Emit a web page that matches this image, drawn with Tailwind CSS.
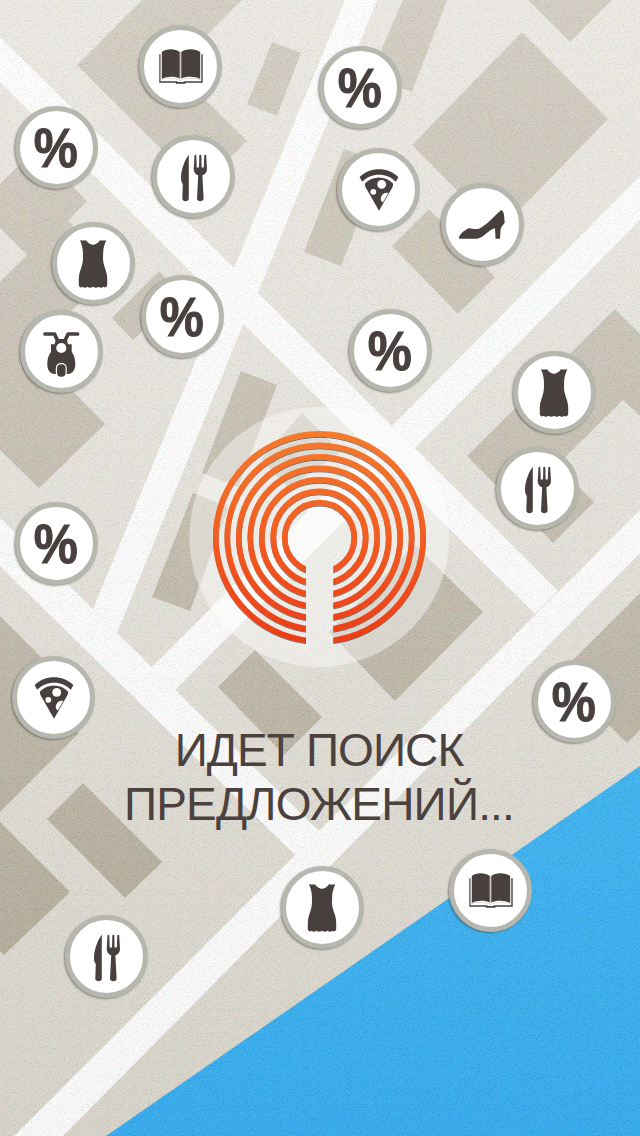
<!DOCTYPE html>
<html lang="ru">
<head>
<meta charset="utf-8">
<title>Идет поиск предложений</title>
<script src="https://cdn.jsdelivr.net/npm/@tailwindcss/browser@4"></script>
</head>
<body class="bg-[#e4e1db]">
<main class="relative w-[640px] h-[1136px] overflow-hidden">
  <!-- Map -->
  <svg class="absolute inset-0" width="640" height="1136" viewBox="0 0 640 1136">
    <defs>
      <linearGradient id="land" gradientUnits="userSpaceOnUse" x1="0" y1="0" x2="0" y2="1136"><stop offset="0" stop-color="#ece9e3"/><stop offset=".5" stop-color="#e2dfd7"/><stop offset="1" stop-color="#d4d0c5"/></linearGradient>
      <linearGradient id="house" gradientUnits="userSpaceOnUse" x1="0" y1="0" x2="0" y2="960"><stop offset="0" stop-color="#d1ccc0"/><stop offset=".4" stop-color="#c5bfb1"/><stop offset="1" stop-color="#aea694"/></linearGradient>
      <linearGradient id="road" gradientUnits="userSpaceOnUse" x1="0" y1="0" x2="0" y2="1136"><stop offset="0" stop-color="#ffffff"/><stop offset="1" stop-color="#f9f9f9"/></linearGradient>
      <linearGradient id="sea" gradientUnits="userSpaceOnUse" x1="0" y1="766" x2="0" y2="1136"><stop offset="0" stop-color="#2eaef1"/><stop offset="1" stop-color="#22a3ec"/></linearGradient>
      <linearGradient id="fire" gradientUnits="userSpaceOnUse" x1="0" y1="431" x2="0" y2="644"><stop offset="0" stop-color="#f67b2d"/><stop offset=".5" stop-color="#f25c22"/><stop offset="1" stop-color="#ee3b16"/></linearGradient>
      <filter id="grain" x="0" y="0" width="100%" height="100%" color-interpolation-filters="sRGB">
        <feTurbulence type="fractalNoise" baseFrequency=".93" numOctaves="3" seed="4"/>
        <feColorMatrix values="1.6 .7 .7 0 -.62  .7 1.6 .7 0 -.62  .7 .7 1.6 0 -.62  0 0 0 0 .13"/>
      </filter>
      <filter id="drop" x="-10%" y="-10%" width="120%" height="120%"><feDropShadow dx="0" dy="1" stdDeviation=".7" flood-color="#000" flood-opacity=".55"/></filter>
      <clipPath id="gap"><path d="M200 420H440V660H333.3V540H306V660H200Z"/></clipPath>
    </defs>
    <rect width="640" height="1136" fill="url(#land)"/>
    <g fill="url(#house)">
      <path d="M142 0H242L174 68L247 141L200 188L77 65Z"/>
      <path d="M272 42L301 53L277 116L247 104Z"/>
      <path d="M0 184L35 149L87 201L68 221L115 268L32 350L105 424L39 488L0 450V282L27 255L0 228Z"/>
      <path d="M159 271L112 318L133 340L181 294Z"/>
      <path d="M241 371L277 385L238 487L202 473Z"/>
      <path d="M193 493L229 507L190 611L152 597Z"/>
      <path d="M302 413L341 452L288 488L261 459Z"/>
      <path d="M415 545L483 612L395 701L329 632Z"/>
      <path d="M255 650L218 687L284 755L322 717Z"/>
      <path d="M403 0H447L412 92L370 76Z"/>
      <path d="M528 0H612L570 42Z"/>
      <path d="M522 32L608 119L498 232L412 145Z"/>
      <path d="M344 149L381 163L341 266L304 252Z"/>
      <path d="M429 209L392 246L458 314L495 277Z"/>
      <path d="M615 309L640 334V416L623 400L557 465L594 502L553 543L467 456Z"/>
      <path d="M640 593L558 675L627 743L640 730Z"/>
      <path d="M0 616L62 678L50 704L79 733L0 812Z"/>
      <path d="M83 783L47 819L125 898L162 862Z"/>
      <path d="M0 822L70 892L4 955L0 951Z"/>
    </g>
    <g fill="url(#road)">
      <path d="M0 37L233 267L258 293L392 426L415 448L558 591L535 614L0 82Z"/>
      <path d="M345 0H377L258 293L243 325L117 633L93 609Z"/>
      <path d="M640 176V220L415 448L392 426Z"/>
      <path d="M0 518L320 832L295 855L0 566Z"/>
      <path d="M152 667L369 450L392 473L175 690Z"/>
      <path d="M640 510V553L63 1136H14L295 855Z"/>
    </g>
    <path d="M640 766V1136H106Z" fill="url(#sea)"/>
    <rect width="640" height="1136" filter="url(#grain)"/>
    <!-- Radar mark -->
    <circle cx="319.3" cy="537" r="130" fill="#fff" fill-opacity=".42"/>
    <g filter="url(#drop)">
      <g clip-path="url(#gap)" fill="none" stroke="url(#fire)" stroke-width="5.7">
        <circle cx="319.5" cy="537.5" r="103.7"/><circle cx="319.5" cy="537.5" r="92.2"/><circle cx="319.5" cy="537.5" r="80.7"/><circle cx="319.5" cy="537.5" r="69.2"/><circle cx="319.5" cy="537.5" r="57.7"/><circle cx="319.5" cy="537.5" r="46.2"/><circle cx="319.5" cy="537.5" r="34.8"/>
      </g>
    </g>
  </svg>

  <!-- Pin glyphs -->
  <svg class="hidden">
    <symbol id="book" viewBox="0 0 73 73">
      <path d="M17.8 22C22 18.3 31 18.3 35.8 22V48.6C31 46 23 46 17.8 49ZM37.2 22C42 18.3 51 18.3 56.2 22V49C51 46 42 46 37.2 48.6Z"/>
      <path d="M15.3 24.3h1.2V51.2H33c.8 0 .8.9 1.6.9h4c.8 0 .8-.9 1.6-.9H57.300V24.300H58.700V52.700H41.500V53.800H31.800V52.700H15.300Z"/>
      <path d="M17.800 49.500C24 47.500 32 48 36.500 50.600C41 48 49 47.500 56.200 49.500" fill="none" stroke="#b9b5b3" stroke-width=".5"/>
      <path d="M36.500 22V49" stroke="#c9c6c4" stroke-width="1.200"/>
    </symbol>
    <symbol id="fork" viewBox="0 0 73 73">
      <path d="M31.800 14.700C28.500 18.500 24.300 29 24 36.500C23.900 39.500 24.200 42 25.800 44L25.300 58.500C25.300 62 31.800 62 31.800 58.500Z"/>
      <path d="M37.500 15.300Q38.500 14.200 39.300 15.300L39.700 27.500H42L42.300 15.300Q43.300 14.200 44.300 15.300L44.600 27.500H46.800L47.300 15.300Q48.200 14.200 49.200 15.300L50 29C50 32.500 48 34.300 45.400 35.300L46.600 58.500C46.600 62 40 62 40 58.500L41.200 35.300C38.600 34.300 36.700 32.500 36.700 29Z"/>
    </symbol>
    <symbol id="dress" viewBox="0 0 73 73">
      <path d="M23 13.200Q26 14 29 13.200C31 16 33.500 17.700 36 17.700S41 16 43 13.200Q46 14 49.300 13.200C47.500 17.500 46.300 21 46.200 25C46 30 45.800 33 46.600 36.500C48 42 50.200 46 50.200 51.500V58.500Q48.700 61.500 46.500 59.700Q44 61.600 41.500 59.700Q39 61.600 36 59.700Q33 61.600 30.500 59.700Q28 61.600 25.500 59.700Q23.300 61.500 21.800 58.500V51.500C21.800 46 24.200 42 25.400 36.500C26.200 33 26 30 25.900 25C25.700 21 24.800 17.500 23 13.200Z"/>
    </symbol>
    <symbol id="pizza" viewBox="0 0 73 73">
      <path d="M17.600 24C28 13.500 46 13.500 56.400 24L53.900 28.800C45 19.300 29 19.300 20.200 28.800Z"/>
      <path d="M23 30.500C30 22.500 44 22.500 51 30.500C51.300 32 50.700 33.500 50 35L37 57.800L24 35C23.200 33.500 22.700 32 23 30.500Z"/>
      <g fill="#fff"><circle cx="39.700" cy="31.400" r="4.400"/><circle cx="31.300" cy="38.800" r="2.900"/><path d="M46.300 40C42.500 38.600 39 42 38.800 45.500C38.800 47.500 39.700 49.300 41 49.200Z"/></g>
    </symbol>
    <symbol id="shoe" viewBox="0 0 73 73">
      <path d="M13 50.700C12.700 46 19 42.500 22 40.500C24.500 39.600 28 42 33 40.700C40 38 49 27 55.200 22C57 22.500 57.700 24.500 58 27L58.700 34.500C57.500 37 55 38.500 54.600 41.500L54 50.700H49.500L49 40.200C43 41 37 50.700 30.500 50.700Z"/>
    </symbol>
    <symbol id="scooter" viewBox="0 0 73 73">
      <path d="M20 19H29.500L33 26.500M52.600 19H43.100L39.600 26.500" fill="none" stroke="#48403e" stroke-width="3.700" stroke-linecap="round" stroke-linejoin="round"/>
      <path d="M31 24H41.700L43 29.300H46.700V37C48.800 39.500 50.300 44 50.300 48.500C50.300 54 48.500 58.700 42.500 59H30.100C24 58.700 22.300 54 22.300 48.500C22.300 44 23.800 39.500 26 37V29.300H29.600Z"/>
      <circle cx="36.300" cy="33" r="5.100" fill="#fff"/>
      <rect x="30.800" y="48" width="11" height="14.500" rx="5" fill="#fff"/>
      <rect x="32" y="49.300" width="8.600" height="12.500" rx="4"/>
    </symbol>
    <symbol id="sale" viewBox="0 0 73 73">
      <text x="13.800" y="55.800" font-family="'Liberation Sans'" font-weight="700" font-size="56" textLength="44" lengthAdjust="spacingAndGlyphs" stroke="#48403e" stroke-width="1">%</text>
    </symbol>
  </svg>

  <!-- Pins on the map -->
  <div class="fill-[#48403e] [&>svg]:absolute [&>svg]:size-[83px] [&>svg]:rounded-full [&>svg]:border-5 [&>svg]:border-[#b6b7af] [&>svg]:bg-white [&>svg]:shadow-[-1px_1px_2px_rgba(60,50,40,0.5)]">
    <svg class="left-[139px] top-[25px]"><use href="#book"/></svg>
    <svg class="left-[319px] top-[46px]"><use href="#sale"/></svg>
    <svg class="left-[15px] top-[106px]"><use href="#sale"/></svg>
    <svg class="left-[152px] top-[135px]"><use href="#fork"/></svg>
    <svg class="left-[337px] top-[148px]"><use href="#pizza"/></svg>
    <svg class="left-[441px] top-[183px]"><use href="#shoe"/></svg>
    <svg class="left-[52px] top-[222px]"><use href="#dress"/></svg>
    <svg class="left-[141px] top-[275px]"><use href="#sale"/></svg>
    <svg class="left-[20px] top-[310px]"><use href="#scooter"/></svg>
    <svg class="left-[349px] top-[309px]"><use href="#sale"/></svg>
    <svg class="left-[513px] top-[351px]"><use href="#dress"/></svg>
    <svg class="left-[496px] top-[447px]"><use href="#fork"/></svg>
    <svg class="left-[15px] top-[502px]"><use href="#sale"/></svg>
    <svg class="left-[12px] top-[656px]"><use href="#pizza"/></svg>
    <svg class="left-[533px] top-[660px]"><use href="#sale"/></svg>
    <svg class="left-[449px] top-[849px]"><use href="#book"/></svg>
    <svg class="left-[281px] top-[866px]"><use href="#dress"/></svg>
    <svg class="left-[65px] top-[915px]"><use href="#fork"/></svg>
  </div>

  <h1 class="relative pt-[723px] pr-[2px] text-center font-['Liberation_Sans',Arial,sans-serif] text-[46px] leading-[54px] text-[#4b413e] whitespace-nowrap">
    <span class="block tracking-[-0.9px]">ИДЕТ ПОИСК</span>
    <span class="block tracking-[-0.8px]">ПРЕДЛОЖЕНИЙ...</span>
  </h1>
</main>
</body>
</html>
